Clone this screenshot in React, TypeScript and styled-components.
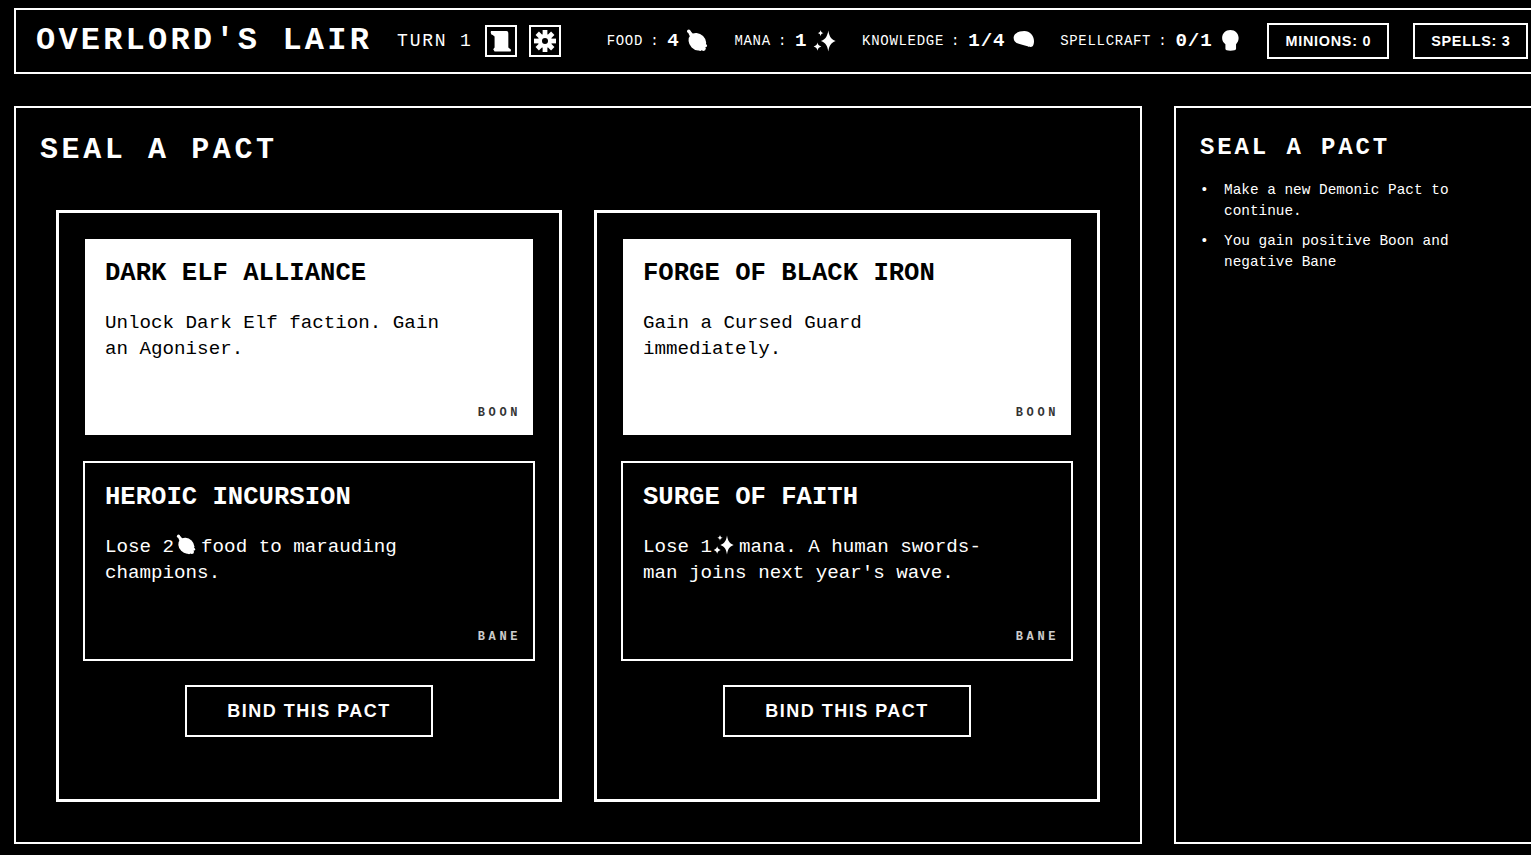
import React from "react";
import styled, { createGlobalStyle } from "styled-components";

const Global = createGlobalStyle`
  html, body { margin: 0; padding: 0; background: #000; overflow: hidden; height: 100%; }
  * { box-sizing: border-box; }
  #root { height: 100%; }
`;

const mono = `"Liberation Mono", monospace`;
const sans = `"Liberation Sans", Arial, sans-serif`;

const Page = styled.div`
  width: 1548px;
  height: 855px;
  padding: 8px 14px 11px;
  display: flex;
  flex-direction: column;
  gap: 32px;
  background: #000;
  color: #fff;
  font-family: ${mono};
`;

const Header = styled.header`
  flex: none;
  height: 66px;
  border: 2px solid #fff;
  padding: 0 20px;
  display: flex;
  align-items: center;
  white-space: nowrap;
`;

const GameTitle = styled.h1`
  flex: none;
  margin: 0 0 2px;
  font-size: 32px;
  font-weight: 700;
  letter-spacing: 3.2px;
`;

const Turn = styled.span`
  flex: none;
  margin-left: 25px;
  font-size: 18px;
  letter-spacing: 1.8px;
`;

const IconButton = styled.button`
  flex: none;
  width: 32px;
  height: 32px;
  margin-left: 12px;
  padding: 0;
  background: #000;
  border: 2px solid #fff;
  display: flex;
  align-items: center;
  justify-content: center;
`;

const Stats = styled.div`
  flex: none;
  margin-left: 46px;
  display: flex;
  align-items: center;
  gap: 26px;
`;

const Stat = styled.div`
  flex: none;
  display: flex;
  align-items: center;
`;

const StatLabel = styled.span`
  font-size: 14px;
  letter-spacing: 0.7px;
  word-spacing: -2px;
`;

const StatValue = styled.span`
  margin: 0 6.7px 0 8px;
  font-size: 19.2px;
  font-weight: 700;
  letter-spacing: 0.9px;
`;

const Counts = styled.div`
  flex: none;
  display: flex;
  gap: 24px;
`;

const CountBox = styled.div<{ $width: number }>`
  width: ${(p) => p.$width}px;
  height: 36px;
  flex: none;
  border: 2px solid #fff;
  display: flex;
  align-items: center;
  justify-content: center;
  font-family: ${sans};
  font-size: 14.4px;
  font-weight: 700;
  letter-spacing: 0.72px;
`;

const Body = styled.main`
  flex: 1;
  min-height: 0;
  display: flex;
  gap: 32px;
`;

const MainPanel = styled.section`
  width: 1128px;
  flex: none;
  border: 2px solid #fff;
  padding: 24px;
  display: flex;
  flex-direction: column;
`;

const MainTitle = styled.h2`
  margin: 0;
  height: 36px;
  line-height: 36px;
  font-size: 30px;
  font-weight: 700;
  letter-spacing: 3.6px;
`;

const Pacts = styled.div`
  flex: 1;
  min-height: 0;
  margin-top: 26px;
  padding: 16px;
  display: grid;
  grid-template-columns: 506px 506px;
  gap: 32px;
`;

const Pact = styled.article`
  border: 3px solid #fff;
  padding: 24px;
  display: flex;
  flex-direction: column;
  gap: 24px;
`;

const Card = styled.div<{ $boon?: boolean }>`
  position: relative;
  height: 200px;
  border: 2px solid ${(p) => (p.$boon ? "#000" : "#fff")};
  background: ${(p) => (p.$boon ? "#fff" : "#000")};
  color: ${(p) => (p.$boon ? "#000" : "#fff")};
  padding: 20px;
`;

const CardTitle = styled.h3`
  margin: 0;
  font-size: 25.6px;
  line-height: 29px;
  font-weight: 700;
`;

const CardText = styled.p`
  margin: 22px 0 0;
  max-width: 350px;
  font-size: 19.2px;
  line-height: 26px;
`;

const Tag = styled.span`
  position: absolute;
  right: 12px;
  bottom: 15px;
  font-size: 12px;
  line-height: 14px;
  font-weight: 700;
  letter-spacing: 3.6px;
  opacity: 0.8;
`;

const Bind = styled.button`
  align-self: center;
  width: 248px;
  height: 52px;
  background: #000;
  color: #fff;
  border: 2px solid #fff;
  font-family: ${sans};
  font-size: 18px;
  font-weight: 700;
  letter-spacing: 1.5px;
`;

const SidePanel = styled.aside`
  width: 360px;
  flex: none;
  border: 2px solid #fff;
  padding: 24px;
`;

const SideTitle = styled.h2`
  margin: 0;
  font-size: 24px;
  line-height: 31px;
  font-weight: 700;
  letter-spacing: 2.88px;
`;

const Tips = styled.ul`
  margin: 17px 0 0;
  padding-left: 24px;
  list-style: none;
`;

const Tip = styled.li`
  position: relative;
  font-size: 14.4px;
  line-height: 21px;
  & + & { margin-top: 9px; }
  &::before {
    content: "•";
    position: absolute;
    left: -24px;
  }
`;

const Glyph = styled.svg<{ $inline?: boolean }>`
  flex: none;
  fill: #fff;
  overflow: visible;
  display: ${(p) => (p.$inline ? "inline-block" : "block")};
  ${(p) => (p.$inline ? "vertical-align: -3px; margin: 0 5px 0 2px;" : "")}
`;

type IconProps = { size?: number; inline?: boolean };

const Icon = ({ size = 22, inline, children }: IconProps & { children: React.ReactNode }) => (
  <Glyph $inline={inline} width={size} height={size} viewBox="0 0 24 24" aria-hidden="true">
    {children}
  </Glyph>
);

const Meat = (p: IconProps) => (
  <Icon {...p}>
    <circle cx="3" cy="1.4" r="1.9" />
    <path d="M2 2.2 L4.4 0.6 L9 5.6 L5 8.6Z" />
    <ellipse cx="12.4" cy="12.8" rx="10.4" ry="8.8" transform="rotate(45 12.4 12.8)" />
    <circle cx="19" cy="20.2" r="2.6" />
    <circle cx="15.6" cy="21.4" r="1.6" />
    <circle cx="21.4" cy="17.2" r="1.6" />
  </Icon>
);

const Sparkles = (p: IconProps) => (
  <Icon {...p}>
    <path d="M15.6 0.6 C16.6 6.4 18 9.8 23.6 12 C18 14.2 16.6 17.6 15.6 23.4 C14.6 17.6 13.2 14.2 7.6 12 C13.2 9.8 14.6 6.4 15.6 0.6Z" />
    <path d="M3.8 13.6 C4.3 16 5.2 17 8 18 C5.2 19 4.3 20 3.8 22.6 C3.3 20 2.4 19 -0.4 18 C2.4 17 3.3 16 3.8 13.6Z" />
    <path d="M7.2 0 C7.6 2 8.2 2.8 10.4 3.4 C8.2 4 7.6 4.8 7.2 6.8 C6.8 4.8 6.2 4 4 3.4 C6.2 2.8 6.8 2 7.2 0Z" />
  </Icon>
);

const Brain = (p: IconProps) => (
  <Icon {...p}>
    <path d="M1.8 8 C2 3.5 8 1 13.4 1 C19.5 1 24 6 24 12 C24 15.5 23 18.5 20.5 18.5 C18.5 18.5 17.5 18 16 17.5 C12 16.5 8 15.5 5 14.2 C3 13.2 1.6 11 1.8 8Z" />
  </Icon>
);

const Bulb = (p: IconProps) => (
  <Icon {...p}>
    <path d="M12.4 0 C17.5 0 21.4 3.8 21.4 8.8 C21.4 12 20 14 18.6 15.5 L18.6 20.5 C18.6 22 16 22.6 12.4 22.6 C9 22.6 7 22 7 20.5 L7 15.5 C5 14 3.4 12 3.4 8.8 C3.4 3.8 7.2 0 12.4 0Z" />
  </Icon>
);

const Scroll = (p: IconProps) => (
  <Icon {...p}>
    <path d="M1 1 L18 1 C19.5 1 20 2 20 4 L20 19 L23 21.5 L22.5 23.5 L5 23.5 L3.5 21 L5 19 L5 7 L3 5.5 L1.5 5 L0.8 3Z" />
  </Icon>
);

const Gear = (p: IconProps) => (
  <Icon {...p}>
    <g>
      {[0, 45, 90, 135].map((a) => (
        <rect key={a} x="9.4" y="0" width="5.2" height="24" transform={`rotate(${a} 12 12)`} />
      ))}
      <circle cx="12" cy="12" r="7.6" />
      <circle cx="12" cy="12" r="3.3" fill="#000" />
    </g>
  </Icon>
);

const pacts = [
  {
    boonTitle: "DARK ELF ALLIANCE",
    boon: "Unlock Dark Elf faction. Gain an Agoniser.",
    baneTitle: "HEROIC INCURSION",
    bane: (
      <>
        Lose 2<Meat size={20} inline />food to marauding champions.
      </>
    ),
  },
  {
    boonTitle: "FORGE OF BLACK IRON",
    boon: "Gain a Cursed Guard immediately.",
    baneTitle: "SURGE OF FAITH",
    bane: (
      <>
        Lose 1<Sparkles size={20} inline />mana. A human swords-man joins next year's wave.
      </>
    ),
  },
];

const stats = [
  { label: "FOOD :", value: "4", icon: <Meat /> },
  { label: "MANA :", value: "1", icon: <Sparkles /> },
  { label: "KNOWLEDGE :", value: "1/4", icon: <Brain /> },
  { label: "SPELLCRAFT :", value: "0/1", icon: <Bulb /> },
];

export default function App() {
  return (
    <Page>
      <Global />
      <Header>
        <GameTitle>OVERLORD'S LAIR</GameTitle>
        <Turn>TURN 1</Turn>
        <IconButton aria-label="Log"><Scroll /></IconButton>
        <IconButton aria-label="Settings"><Gear /></IconButton>
        <Stats>
          {stats.map((s) => (
            <Stat key={s.label}>
              <StatLabel>{s.label}</StatLabel>
              <StatValue>{s.value}</StatValue>
              {s.icon}
            </Stat>
          ))}
          <Counts>
            <CountBox $width={122}>MINIONS: 0</CountBox>
            <CountBox $width={115}>SPELLS: 3</CountBox>
          </Counts>
        </Stats>
      </Header>
      <Body>
        <MainPanel>
          <MainTitle>SEAL A PACT</MainTitle>
          <Pacts>
            {pacts.map((p) => (
              <Pact key={p.boonTitle}>
                <Card $boon>
                  <CardTitle>{p.boonTitle}</CardTitle>
                  <CardText>{p.boon}</CardText>
                  <Tag>BOON</Tag>
                </Card>
                <Card>
                  <CardTitle>{p.baneTitle}</CardTitle>
                  <CardText>{p.bane}</CardText>
                  <Tag>BANE</Tag>
                </Card>
                <Bind>BIND THIS PACT</Bind>
              </Pact>
            ))}
          </Pacts>
        </MainPanel>
        <SidePanel>
          <SideTitle>SEAL A PACT</SideTitle>
          <Tips>
            <Tip>Make a new Demonic Pact to continue.</Tip>
            <Tip>You gain positive Boon and negative Bane</Tip>
          </Tips>
        </SidePanel>
      </Body>
    </Page>
  );
}
